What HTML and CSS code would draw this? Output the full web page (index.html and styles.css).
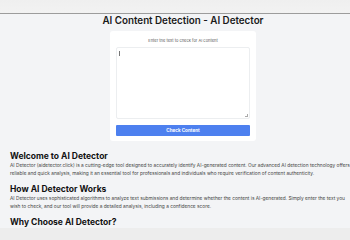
FILE: index.html
```html
<!DOCTYPE html>
<html>
<head>
<meta charset="utf-8">
<link rel="stylesheet" href="styles.css">
</head>
<body>
<div class="topbar"></div>
<main class="page">
  <h1 class="title">AI Content Detection - AI Detector</h1>
  <div class="card">
    <div class="label">Enter the text to check for AI content</div>
    <div class="textarea"><span class="caret"></span><span class="grip"></span></div>
    <div class="button">Check Content</div>
  </div>
  <section class="info">
    <h2>Welcome to AI Detector</h2>
    <p><span class="line">AI Detector (aidetector.click) is a cutting-edge tool designed to accurately identify AI-generated content. Our advanced AI detection technology offers</span><span class="line">reliable and quick analysis, making it an essential tool for professionals and individuals who require verification of content authenticity.</span></p>
    <h2>How AI Detector Works</h2>
    <p><span class="line">AI Detector uses sophisticated algorithms to analyze text submissions and determine whether the content is AI-generated. Simply enter the text you</span><span class="line">wish to check, and our tool will provide a detailed analysis, including a confidence score.</span></p>
    <h2>Why Choose AI Detector?</h2>
  </section>
</main>
<div class="bottombar"></div>
</body>
</html>
```
FILE: styles.css
```css
html, body {
  margin: 0;
  padding: 0;
  overflow: hidden;
  background: #f3f4f6;
  font-family: Inter, "Liberation Sans", sans-serif;
  color: #111;
}
.topbar {
  height: 13px;
  background: linear-gradient(to bottom, #efefef, #f2f2f2);
  border-bottom: 1px solid #9c9c9c;
}
.page {
  width: 366px;
  display: flex;
  flex-direction: column;
  align-items: center;
}
.title {
  margin: 1px 0 0 0;
  font-size: 9.8px;
  font-weight: 600;
  line-height: 12px;
  color: #1a1a1a;
}
.card {
  margin-top: 4px;
  width: 134px;
  padding: 7px 6px 5px 6px;
  background: #fff;
  border-radius: 3px;
  display: flex;
  flex-direction: column;
}
.label {
  font-size: 4px;
  color: #555;
  text-align: center;
  line-height: 5px;
}
.textarea {
  margin-top: 4px;
  height: 72px;
  border: 1px solid #eceef0;
  border-radius: 2px;
  position: relative;
  box-sizing: border-box;
}
.caret {
  position: absolute;
  left: 2px;
  top: 3px;
  width: 1px;
  height: 5px;
  background: #777;
}
.grip {
  position: absolute;
  right: 1px;
  bottom: 1px;
  width: 2px;
  height: 2px;
  border-right: 1px solid #aaa;
  border-bottom: 1px solid #aaa;
}
.button {
  margin-top: 6px;
  height: 11px;
  background: #4d80ef;
  color: #fff;
  font-size: 4.6px;
  font-weight: 700;
  line-height: 11px;
  text-align: center;
  border-radius: 1px;
}
.info {
  align-self: stretch;
  padding: 10px 0 0 10px;
}
.info h2 {
  margin: 0;
  font-size: 8.5px;
  font-weight: 700;
  line-height: 10px;
  color: #111;
}
.info p {
  margin: 0 0 7px 0;
  font-size: 4.8px;
  line-height: 8px;
  color: #444;
}
.line {
  display: block;
  white-space: nowrap;
}
.bottombar {
  position: fixed;
  left: 0;
  right: 0;
  bottom: 0;
  height: 12px;
  background: #ededed;
}
```
